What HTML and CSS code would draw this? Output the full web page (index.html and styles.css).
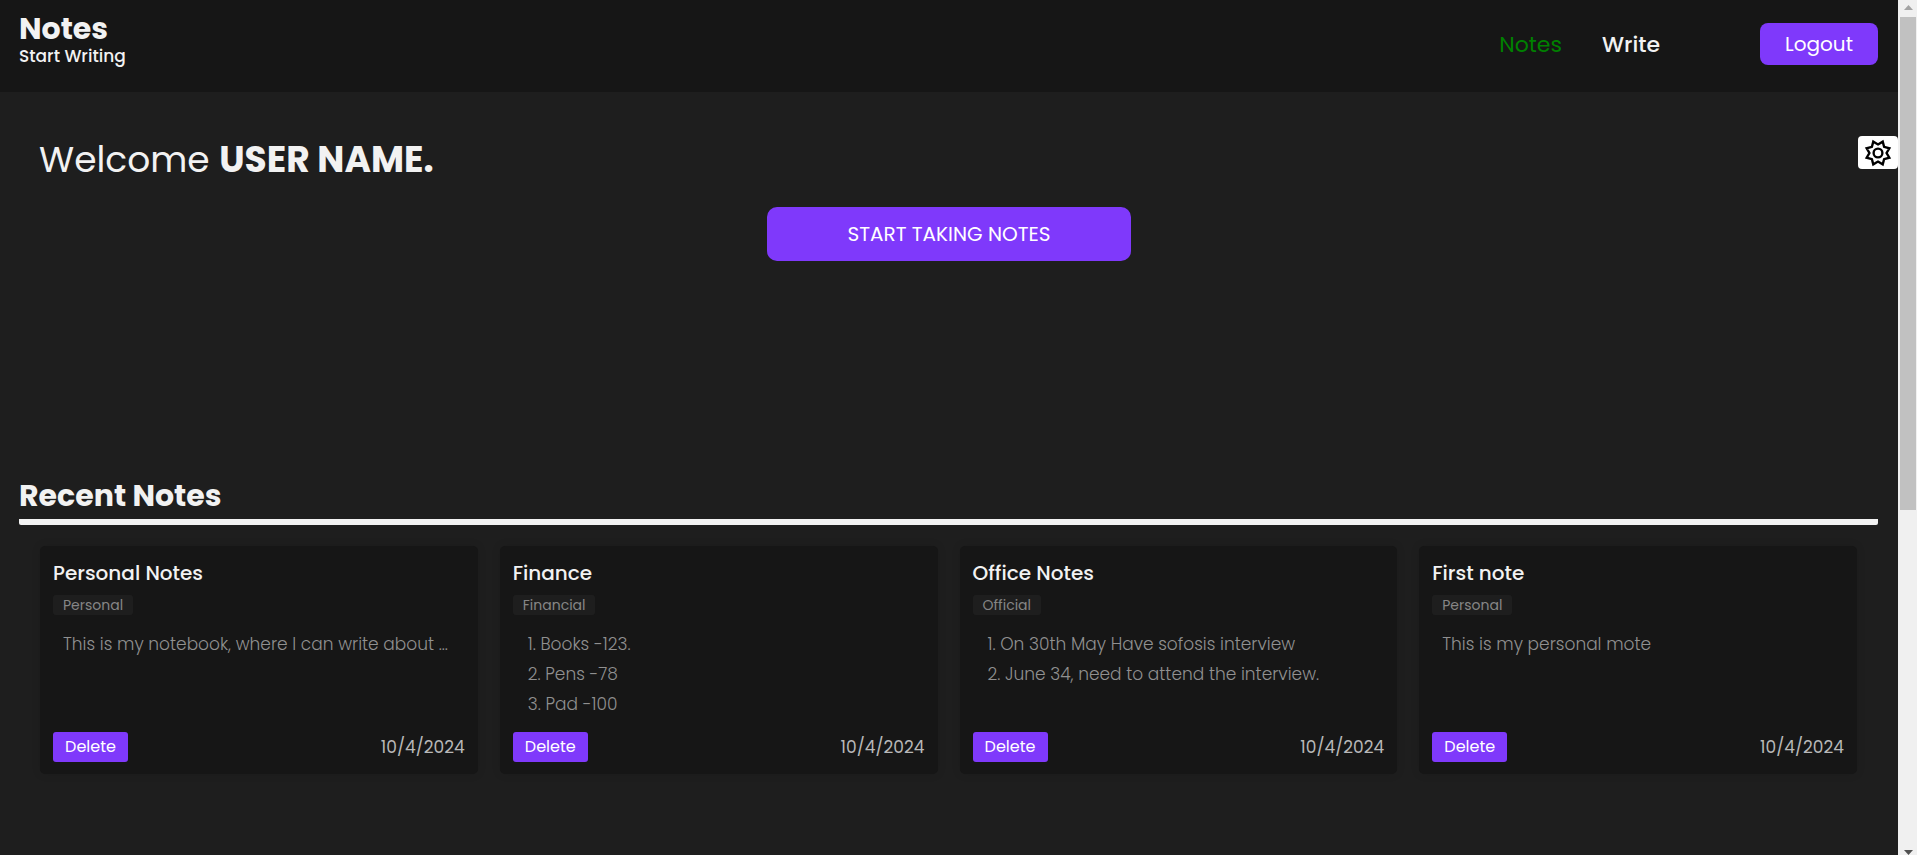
FILE: index.html
```html
<!DOCTYPE html>
<html lang="en">
<head>
<meta charset="utf-8">
<meta name="viewport" content="width=device-width, initial-scale=1">
<title>Notes</title>
<link rel="stylesheet" href="styles.css">
</head>
<body>
<div class="page">
  <header class="header">
    <div class="brand">
      <h1 class="brand-name">Notes</h1>
      <p class="brand-tag">Start Writing</p>
    </div>
    <nav class="nav">
      <a class="nav-link nav-link-active" href="#notes">Notes</a>
      <a class="nav-link" href="#write">Write</a>
      <button class="logout" type="button">Logout</button>
    </nav>
  </header>
  <main>
    <section class="hero">
      <h2 class="welcome">Welcome <strong>USER NAME.</strong></h2>
      <button class="start" type="button">START TAKING NOTES</button>
    </section>
    <section class="recent" id="notes">
      <h2 class="recent-title">Recent Notes</h2>
      <div class="cards">
        <article class="card">
          <h3 class="card-title">Personal Notes</h3>
          <span class="tag">Personal</span>
          <p class="card-text">This is my notebook, where I can write about ...</p>
          <div class="card-foot"><button class="delete" type="button">Delete</button><time datetime="2024-04-10">10/4/2024</time></div>
        </article>
        <article class="card">
          <h3 class="card-title">Finance</h3>
          <span class="tag">Financial</span>
          <ul class="card-text card-list"><li>1. Books -123.</li><li>2. Pens -78</li><li>3. Pad -100</li></ul>
          <div class="card-foot"><button class="delete" type="button">Delete</button><time datetime="2024-04-10">10/4/2024</time></div>
        </article>
        <article class="card">
          <h3 class="card-title">Office Notes</h3>
          <span class="tag">Official</span>
          <ul class="card-text card-list"><li>1. On 30th May Have sofosis interview</li><li>2. June 34, need to attend the interview.</li></ul>
          <div class="card-foot"><button class="delete" type="button">Delete</button><time datetime="2024-04-10">10/4/2024</time></div>
        </article>
        <article class="card">
          <h3 class="card-title">First note</h3>
          <span class="tag">Personal</span>
          <p class="card-text">This is my personal mote</p>
          <div class="card-foot"><button class="delete" type="button">Delete</button><time datetime="2024-04-10">10/4/2024</time></div>
        </article>
      </div>
    </section>
  </main>
  <button class="theme" type="button" aria-label="Toggle theme">
    <svg width="30" height="30" viewBox="-14 -14 28 28" fill="none" stroke="#000" stroke-width="2.200" aria-hidden="true">
      <path d="M0-8 4.4-10.6 5.7-5.7 10.6-4.4 8 0 10.6 4.4 5.7 5.7 4.4 10.6 0 8-4.4 10.6-5.7 5.7-10.6 4.4-8 0-10.6-4.4-5.7-5.7-4.4-10.6Z"/>
      <circle r="4.1"/>
    </svg>
  </button>
</div>
<div class="scrollbar" aria-hidden="true">
  <svg class="arrow" width="9" height="5" viewBox="0 0 9 5"><path d="M0 5 4.500 0 9 5Z" fill="#a3a3a3"/></svg>
  <div class="thumb"></div>
  <svg class="arrow arrow-down" width="9" height="5" viewBox="0 0 9 5"><path d="M0 0h9L4.500 5Z" fill="#505050"/></svg>
</div>
</body>
</html>
```
FILE: styles.css
```css
* { box-sizing: border-box; margin: 0; padding: 0; }

body {
  display: flex;
  height: 100vh;
  overflow: hidden;
  background: #1e1e1e;
  color: #f2f2f2;
  font-family: Poppins, Inter, "Open Sans", sans-serif;
  font-size: 16px;
}

button { border: 0; background: #7f39fb; color: #fff; font: inherit; cursor: pointer; }

.page { position: relative; flex: 1; min-width: 0; }

.header {
  display: flex;
  justify-content: space-between;
  align-items: flex-start;
  min-height: 92px;
  padding: 12px 20px 0 19px;
  background: #161616;
}
.brand-name { font-size: 30px; line-height: 34px; font-weight: 700; }
.brand-tag { font-size: 17px; line-height: 20px; font-weight: 500; }

.nav { display: flex; align-items: center; padding-top: 11px; }
.nav-link { margin-right: 40px; color: #f2f2f2; font-size: 22px; font-weight: 500; text-decoration: none; }
.nav-link-active { color: #008000; font-weight: 400; }
.logout { min-width: 118px; height: 42px; margin-left: 60px; border-radius: 8px; font-size: 20px; }

.hero { display: flex; flex-direction: column; align-items: center; min-height: 370px; padding: 41px 39px 0; }
.welcome { align-self: flex-start; font-size: 36px; line-height: 54px; font-weight: 400; }
.welcome strong { font-weight: 700; }
.start { width: 20%; min-width: 363px; height: 54px; margin-top: 20px; border-radius: 10px; font-size: 20px; }

.recent { padding: 12px 20px 0 19px; }
.recent-title {
  padding-bottom: 2px;
  border-bottom: 6px solid #f2f2f2;
  border-radius: 2px;
  font-size: 30px;
  line-height: 43px;
  font-weight: 700;
}
.cards { display: grid; grid-template-columns: repeat(4, 1fr); gap: 22px; padding: 21px 21px 0; }
.card {
  display: flex;
  flex-direction: column;
  align-items: flex-start;
  min-height: 228px;
  padding: 12px 13px;
  border-radius: 5px;
  background: #161616;
  box-shadow: 0 0 10px rgba(0, 0, 0, 0.1);
}
.card-title { font-size: 20px; line-height: 30px; font-weight: 500; }
.tag { margin-top: 7px; padding: 0 10px; border-radius: 3px; background: #1e1e1e; color: #868686; font-size: 14px; line-height: 20px; }
.card-text { margin-top: 14px; padding: 0 10px; color: #909090; font-size: 17px; font-weight: 300; line-height: 30px; white-space: nowrap; }
.card-list { padding-left: 15px; list-style: none; }
.card-foot { display: flex; justify-content: space-between; align-items: center; width: 100%; margin-top: auto; color: #b8b8b8; font-size: 17px; line-height: 30px; }
.delete { min-width: 75px; height: 30px; border-radius: 3px; font-size: 16px; }

.theme {
  position: absolute;
  top: 136px;
  right: 0;
  display: flex;
  align-items: center;
  justify-content: center;
  width: 40px;
  height: 33px;
  border-radius: 4px;
  background: #fff;
}

.scrollbar { display: flex; flex-direction: column; align-items: center; width: 19px; height: 100vh; padding: 5px 1px 0 2px; background: #f0f0f0; }
.arrow { flex: none; }
.thumb { width: 100%; height: 58%; margin-top: 7px; background: #c1c1c1; }
.arrow-down { margin-top: auto; }
```
